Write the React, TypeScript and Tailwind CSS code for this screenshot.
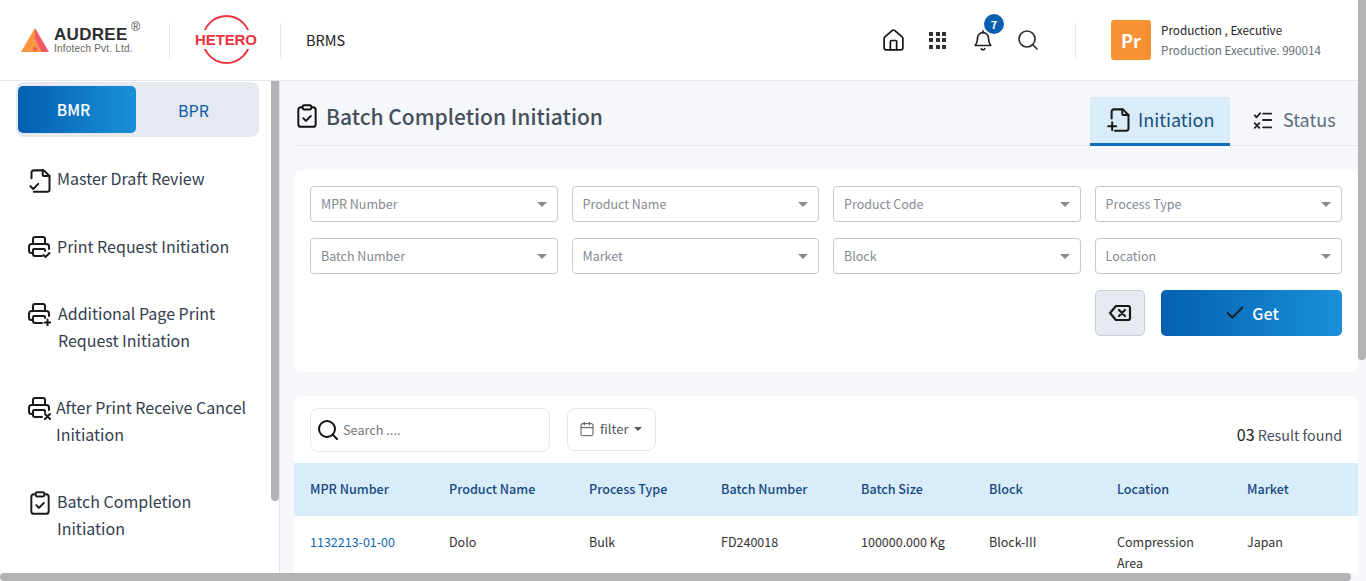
import React from 'react'
import { Home, Search, Calendar, Check } from 'lucide-react'

const FONT = "font-['Noto_Sans_CJK_JP','Noto_Sans',sans-serif]"

type IconProps = { className?: string }

const Svg: React.FC<IconProps & { children: React.ReactNode; vb?: string; sw?: number }> = ({ className, children, vb = '0 0 24 24', sw = 2 }) => (
  <svg viewBox={vb} fill="none" stroke="currentColor" strokeWidth={sw} strokeLinecap="round" strokeLinejoin="round" className={className}>
    {children}
  </svg>
)

const FileCheckIcon = ({ className }: IconProps) => (
  <Svg className={className} sw={1.800}>
    <path d="M4 10V5a2 2 0 0 1 2-2h9l5 5v12a2 2 0 0 1-2 2H6" />
    <path d="M14 3v4a1 1 0 0 0 1 1h5" />
    <path d="M3 17l2.500 2.500L10 15" />
  </Svg>
)

const FilePlusIcon = ({ className }: IconProps) => (
  <Svg className={className} sw={1.800}>
    <path d="M5 11V5a2 2 0 0 1 2-2h8l5 5v12a2 2 0 0 1-2 2H8" />
    <path d="M14.500 3v4a1 1 0 0 0 1 1h4.500" />
    <path d="M2 18h7M5.500 14.500v7" />
  </Svg>
)

const PrinterBase = () => (
  <>
    <path d="M6 9V4a2 2 0 0 1 2-2h8a2 2 0 0 1 2 2v5" />
    <path d="M6 18H4.500A2.500 2.500 0 0 1 2 15.500v-4A2.500 2.500 0 0 1 4.500 9h15a2.500 2.500 0 0 1 2.500 2.500V14" />
    <path d="M15 21H8a2 2 0 0 1-2-2v-4a1 1 0 0 1 1-1h10a1 1 0 0 1 1 1v1" />
  </>
)

const PrinterCheckIcon = ({ className }: IconProps) => (
  <Svg className={className}>
    <PrinterBase />
    <path d="M16.500 20l2 2 4-4" />
  </Svg>
)

const PrinterPlusIcon = ({ className }: IconProps) => (
  <Svg className={className}>
    <PrinterBase />
    <path d="M17.500 20.500h6M20.500 17.500v6" />
  </Svg>
)

const PrinterXIcon = ({ className }: IconProps) => (
  <Svg className={className}>
    <PrinterBase />
    <path d="M18 18l5 5M23 18l-5 5" />
  </Svg>
)

const ClipboardCheckIcon = ({ className }: IconProps) => (
  <Svg className={className} sw={1.800}>
    <rect x="4" y="4" width="16" height="18" rx="2.500" />
    <rect x="8" y="2" width="8" height="4" rx="1.500" fill="#fff" />
    <path d="M8.500 14l2.500 2.500 4.500-4.500" />
  </Svg>
)

const ChecklistIcon = ({ className }: IconProps) => (
  <Svg className={className}>
    <path d="M3 7l2 2 4-4.500M3 15.500l5 5M8 15.500l-5 5" />
    <path d="M12 5h9M12 12h9M12 20h9" />
  </Svg>
)

const BellIcon = ({ className }: IconProps) => (
  <Svg className={className} sw={1.800}>
    <path d="M6 10a6 6 0 0 1 12 0c0 5 1.500 6.500 2.500 8h-17C4.500 16.500 6 15 6 10z" />
    <path d="M10 21.500a2.200 2.200 0 0 0 4 0" />
    <path d="M12 2v2" />
  </Svg>
)

const BackspaceIcon = ({ className }: IconProps) => (
  <Svg className={className} sw={2.200}>
    <path d="M8 5h12a2 2 0 0 1 2 2v10a2 2 0 0 1-2 2H8l-6-7z" />
    <path d="M11 9l6 6M17 9l-6 6" />
  </Svg>
)

const GridDots = () => (
  <div className="grid grid-cols-3 gap-[2.500px]">
    {Array.from({ length: 9 }).map((_, i) => (
      <span key={i} className="h-[4px] w-[4px] bg-[#333]" />
    ))}
  </div>
)

const AudreeLogo = () => (
  <div className="flex items-center font-['Liberation_Sans',sans-serif]">
    <svg viewBox="0 0 28 24" className="h-[24px] w-[28px]">
      <path d="M14 0L0 24h8l6-12z" fill="#f9943b" />
      <path d="M14 0l14 24h-8L14 12z" fill="#f4596a" />
      <path d="M14 12l6 12H8z" fill="#f9943b" />
      <circle cx="14" cy="21" r="2" fill="#f4596a" />
    </svg>
    <div className="relative ml-[5px] w-[85px]">
      <div className="text-[17px] leading-[17px] font-bold tracking-[0.3px] text-[#2d2d2d]">AUDREE</div>
      <div className="text-[10px] leading-[12px] tracking-[0.2px] whitespace-nowrap text-[#666]">Infotech Pvt. Ltd.</div>
      <span className="absolute top-[-6px] right-[-1px] text-[12px] leading-[14px] text-[#444]">®</span>
    </div>
  </div>
)

const HeteroLogo = () => (
  <div className="relative h-[50px] w-[62px] font-['Liberation_Sans',sans-serif]">
    <div className="absolute top-0 left-[7px] h-[49px] w-[49px] rounded-full border-2 border-[#e8353f]" />
    <div className="absolute top-[15px] left-0 bg-white text-[15px] leading-[19px] font-bold tracking-[-0.1px] text-[#e8353f]">HETERO</div>
  </div>
)

const Divider = () => <div className="h-[35px] w-px bg-[#e6e8ec]" />

const Header = () => (
  <header className="flex h-[81px] items-center border-b border-[#e3e7ed] bg-white pr-[39px] pl-[21px]">
    <AudreeLogo />
    <div className="ml-[30px]"><Divider /></div>
    <div className="ml-[25px]"><HeteroLogo /></div>
    <div className="ml-[23px]"><Divider /></div>
    <div className="ml-[25px] text-[14.500px] text-[#222]">BRMS</div>
    <div className="ml-auto flex items-center">
      <Home className="h-[25px] w-[25px] text-[#111]" strokeWidth={1.600} />
      <div className="ml-[23px]"><GridDots /></div>
      <div className="relative ml-[26px]">
        <BellIcon className="h-[22px] w-[22px] text-[#222]" />
        <span className="absolute top-[-15px] left-[12px] flex h-[20px] w-[20px] items-center justify-center rounded-full bg-[#0b5fae] text-[11px] font-bold text-white">7</span>
      </div>
      <Search className="ml-[22px] h-[24px] w-[24px] text-[#333]" strokeWidth={1.700} />
      <div className="ml-[35px]"><Divider /></div>
      <div className="ml-[35px] flex h-[40px] w-[40px] items-center justify-center rounded-[3px] bg-[#f89133] text-[18px] font-bold text-white">Pr</div>
      <div className="ml-[10px] w-[166px]">
        <div className="text-[11.700px] leading-[20px] text-[#222]">Production , Executive</div>
        <div className="text-[11.700px] leading-[20px] text-[#666e78]">Production Executive. 990014</div>
      </div>
    </div>
  </header>
)

const sideItems = [
  { label: 'Master Draft Review', icon: <FileCheckIcon className="mt-[3px] h-[27px] w-[27px]" />, cls: 'mt-0' },
  { label: 'Print Request Initiation', icon: <PrinterCheckIcon className="h-[24px] w-[24px]" />, cls: 'mt-[41px]' },
  { label: 'Additional Page Print Request Initiation', icon: <PrinterPlusIcon className="h-[24px] w-[24px]" />, cls: 'mt-[40px]' },
  { label: 'After Print Receive Cancel Initiation', icon: <PrinterXIcon className="h-[24px] w-[24px]" />, cls: 'mt-[40px]' },
  { label: 'Batch Completion Initiation', icon: <ClipboardCheckIcon className="mt-[3px] h-[26px] w-[26px]" />, cls: 'mt-[40px]' },
]

const Sidebar = () => (
  <aside className="w-[280px] shrink-0 border-r border-[#e3e7ed] bg-white pt-px pl-[16px]">
    <div className="flex h-[55px] w-[243px] items-center rounded-[8px] bg-[#e6e9ef] px-[2px]">
      <div className="flex h-[47px] w-[118px] items-center justify-center rounded-[5px] bg-gradient-to-r from-[#0560b0] to-[#1a90d9] pr-[7px] text-[15.500px] font-medium text-white">BMR</div>
      <div className="flex h-[47px] w-[115px] items-center justify-center text-[16px] text-[#0b5cad]">BPR</div>
    </div>
    <nav className="mt-[28px] w-[236px] pl-[11px]">
      {sideItems.map((item, i) => (
        <div key={item.label} className={`flex items-start ${item.cls}`}>
          <div className="flex h-[27px] w-[30px] shrink-0 items-center text-[#1a1a1a]">{item.icon}</div>
          <div className={`text-[16px] leading-[27px] text-[#333d4d] ${i === 2 ? 'ml-px' : ''} ${i === 3 ? '-ml-px' : ''}`}>{item.label}</div>
        </div>
      ))}
    </nav>
  </aside>
)

const selects = ['MPR Number', 'Product Name', 'Product Code', 'Process Type', 'Batch Number', 'Market', 'Block', 'Location']

const columns = ['MPR Number', 'Product Name', 'Process Type', 'Batch Number', 'Batch Size', 'Block', 'Location', 'Market']

const gridCols = 'grid grid-cols-[139px_140px_132px_140px_128px_128px_130px_1fr]'

const TitleRow = () => (
  <div className="flex h-[65px] items-end border-b border-[#e5e7eb]">
    <div className="mb-[11px] flex flex-1 items-center self-end">
      <ClipboardCheckIcon className="mr-[6px] h-[26px] w-[26px] text-[#111]" />
      <h1 className="text-[21px] leading-[36px] font-medium text-[#464f5c]">Batch Completion Initiation</h1>
    </div>
    <div className="-mb-px flex h-[49px] w-[140px] items-center gap-[5px] border-b-[3px] border-[#0b6fbd] bg-[#d9ecfa] pb-[1px] pl-[16px] text-[18px] text-[#17507f]">
      <FilePlusIcon className="h-[27px] w-[27px] text-[#1a1a1a]" />
      Initiation
    </div>
    <div className="-mb-px flex h-[49px] w-[128px] items-center justify-start gap-[9px] pb-[4px] pl-[22px] text-[18px] text-[#5f6b7a]">
      <ChecklistIcon className="h-[22px] w-[22px] text-[#222]" />
      Status
    </div>
  </div>
)

const FilterCard = () => (
  <section className="mt-[24px] h-[202px] rounded-[8px] bg-white p-[16px]">
    <div className="grid grid-cols-4 gap-x-[14px] gap-y-[16px]">
      {selects.map(s => (
        <div key={s} className="flex h-[36px] items-center justify-between rounded-[4px] border border-[#c9c9c9] bg-white px-[10px] text-[12.500px] text-[#858a92]">
          {s}
          <span className="h-0 w-0 border-x-[5px] border-t-[5px] border-x-transparent border-t-[#8b8b8b]" />
        </div>
      ))}
    </div>
    <div className="mt-[16px] flex justify-end gap-[16px]">
      <button className="flex h-[46px] w-[50px] items-center justify-center rounded-[5px] border border-[#ccd0d6] bg-[#e6e9ef] text-[#1a1a1a]">
        <BackspaceIcon className="h-[24px] w-[24px]" />
      </button>
      <button className="flex h-[46px] w-[181px] items-center justify-center gap-[6px] rounded-[5px] bg-gradient-to-r from-[#0560b0] to-[#1a90d9] pb-px text-[16px] font-medium text-white">
        <Check className="h-[22px] w-[22px] text-[#1a1a1a]" strokeWidth={2} />
        Get
      </button>
    </div>
  </section>
)

const ResultsCard = () => (
  <section className="mt-[24px] rounded-t-[8px] bg-white">
    <div className="flex h-[67px] items-start px-[16px] pt-[12px]">
      <div className="flex h-[44px] w-[240px] items-center rounded-[8px] border border-[#e6e8ec] pl-[5px] text-[12.700px] text-[#777]">
        <Search className="mr-[3px] h-[24px] w-[24px] text-[#111]" strokeWidth={2} />
        Search ....
      </div>
      <div className="ml-[17px] flex h-[43px] w-[89px] items-center rounded-[8px] border border-[#e6e8ec] pb-[2px] pl-[11px] text-[13px] text-[#555]">
        <Calendar className="mr-[5px] h-[16px] w-[16px] text-[#555]" strokeWidth={1.500} />
        filter
        <span className="ml-[6px] h-0 w-0 border-x-[4px] border-t-[4px] border-x-transparent border-t-[#555]" />
      </div>
      <div className="mt-[13px] ml-auto text-[14.300px] leading-[26px] text-[#46505c]">
        <span className="text-[16px] text-[#222]">03</span> Result found
      </div>
    </div>
    <div className={`${gridCols} h-[53px] items-center bg-[#d9ecfa] pl-[16px] text-[12.600px] font-medium text-[#17497f]`}>
      {columns.map(c => <div key={c}>{c}</div>)}
    </div>
    <div className={`${gridCols} pt-[15px] pl-[16px] text-[12.500px] leading-[21px] text-[#333]`}>
      <div className="text-[#0f67b5]">1132213-01-00</div>
      <div>Dolo</div>
      <div>Bulk</div>
      <div>FD240018</div>
      <div>100000.000 Kg</div>
      <div>Block-III</div>
      <div className="w-[90px]">Compression Area</div>
      <div>Japan</div>
    </div>
  </section>
)

export default function App() {
  return (
    <div className={`relative h-[581px] w-[1366px] overflow-hidden bg-white ${FONT}`}>
      <Header />
      <div className="flex h-[500px]">
        <Sidebar />
        <main className="min-w-0 flex-1 bg-[#f5f7fa] pr-[8px] pl-[14px]">
          <TitleRow />
          <FilterCard />
          <ResultsCard />
        </main>
      </div>
      {/* fake scrollbars from the screenshot */}
      <div className="absolute top-[81px] left-[271px] h-[420px] w-[8px] rounded-b-[4px] bg-[#b3b3b3]" />
      <div className="absolute top-0 right-0 h-[360px] w-[8px] rounded-b-[4px] bg-[#b3b3b3]" />
      <div className="absolute bottom-0 left-0 h-[8px] w-[1351px] rounded-full bg-[#b3b3b3]" />
    </div>
  )
}
